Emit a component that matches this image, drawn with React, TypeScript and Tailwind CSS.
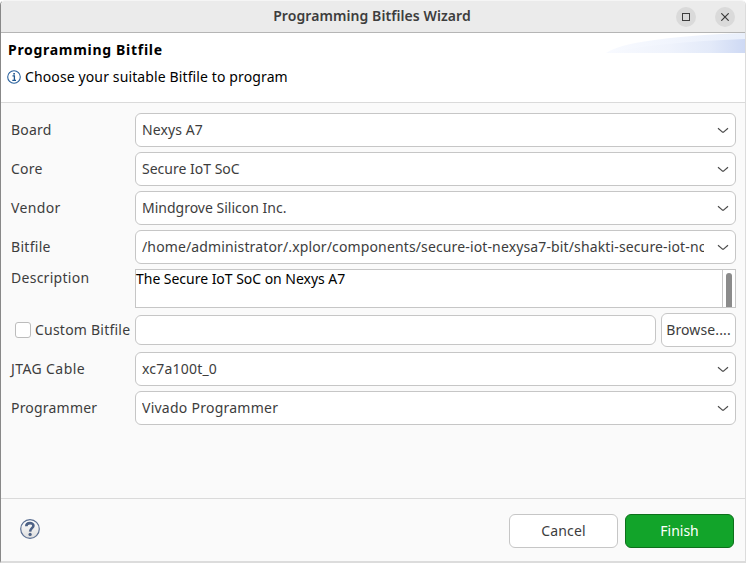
import type { ReactNode } from "react";

function Chevron() {
  return (
    <svg width="12" height="8" viewBox="0 0 12 8" fill="none" stroke="#4a4a4a" strokeWidth="1.2" className="shrink-0">
      <path d="M1 2.2 L5.2 5.9 Q6 6.5 6.8 5.9 L11 2.2" />
    </svg>
  );
}

function Select({ children, tracking = "" }: { children: ReactNode; tracking?: string }) {
  return (
    <button className="flex h-[34px] w-full items-center rounded-[6px] border border-[#c6c6c6] bg-white pr-[6px] pl-[6px] text-left">
      <span className={`mr-[13px] min-w-0 flex-1 overflow-hidden whitespace-nowrap ${tracking}`}>{children}</span>
      <Chevron />
    </button>
  );
}

function Row({ label, tracking = "", children }: { label: string; tracking?: string; children: ReactNode }) {
  return (
    <div className="flex items-center">
      <label className={`w-[124px] shrink-0 whitespace-nowrap ${tracking}`}>{label}</label>
      <div className="min-w-0 flex-1">{children}</div>
    </div>
  );
}

export default function App() {
  return (
    <div className="flex h-[563px] w-[746px] flex-col overflow-hidden rounded-t-[5px] border-x border-t border-b-2 border-t-[#f5f5f5] border-r-[#dcdcdc] border-b-[#dcdcdc] border-l-[#888888] bg-[#fafafa] font-['Noto_Sans','Open_Sans',sans-serif] text-[14px] leading-[20px] text-[#3d3d3d]">
      <header className="flex h-[32px] shrink-0 items-center border-b border-[#b5b5b5] bg-[#ebebeb]">
        <div className="w-[78px]" />
        <h1 className="flex-1 pb-[2px] text-center text-[14px] font-semibold tracking-[0.08px]">Programming Bitfiles Wizard</h1>
        <div className="flex w-[80px] gap-[19px] pl-[11px]">
          <button className="flex size-5 items-center justify-center rounded-full bg-[#dadada]">
            <span className="size-2 border border-[#3d3d3d]" />
          </button>
          <button className="flex size-5 items-center justify-center rounded-full bg-[#dadada]">
            <svg width="8" height="8" viewBox="0 0 8 8" stroke="#3d3d3d" strokeWidth="1.2">
              <path d="M0.3 0.3 L7.7 7.7 M7.7 0.3 L0.3 7.7" />
            </svg>
          </button>
        </div>
      </header>

      <section className="flex h-[70px] shrink-0 justify-between border-b border-[#dadada] bg-white text-black">
        <div className="pt-[7px] pl-[6px]">
          <h2 className="pl-px text-[14px] font-bold tracking-[0.7px]">Programming Bitfile</h2>
          <div className="mt-[7px] flex items-center gap-[4px]">
            <svg width="14" height="14" viewBox="0 0 14 14" className="-mt-px">
              <circle cx="7" cy="7" r="6.3" fill="#fff" stroke="#28609d" strokeWidth="1.1" />
              <path d="M5.5 5.8 H7.4 V10.4 M5.3 10.4 H9" fill="none" stroke="#1d568f" strokeWidth="1.3" />
              <rect x="6.3" y="3" width="1.6" height="1.6" fill="#1d568f" />
            </svg>
            <p className="tracking-[0.12px]">Choose your suitable Bitfile to program</p>
          </div>
        </div>
        <svg width="139" height="20" viewBox="0 0 139 20">
          <defs>
            <linearGradient id="swoosh" x1="0" x2="1">
              <stop offset="0" stopColor="#f8faff" />
              <stop offset="0.45" stopColor="#eff3fc" />
              <stop offset="0.75" stopColor="#e3eaf9" />
              <stop offset="1" stopColor="#ced9f4" />
            </linearGradient>
            <linearGradient id="swoosh-edge" x1="0" x2="1">
              <stop offset="0" stopColor="#f8faff" />
              <stop offset="1" stopColor="#e9effb" />
            </linearGradient>
          </defs>
          <path d="M0 20 C14 10 60 3 139 0 V20 Z" fill="url(#swoosh-edge)" />
          <path d="M0 20 C35 13 80 8 139 6 V20 Z" fill="url(#swoosh)" />
        </svg>
      </section>

      <main className="flex h-[396px] shrink-0 flex-col gap-[5px] border-b border-[#dadada] pt-[10px] pr-[9px] pl-[10px]">
        <Row label="Board" tracking="tracking-[0.2px]"><Select tracking="tracking-[0.1px]">Nexys A7</Select></Row>
        <Row label="Core" tracking="tracking-[0.2px]"><Select>Secure IoT SoC</Select></Row>
        <Row label="Vendor" tracking="tracking-[0.35px]"><Select>Mindgrove Silicon Inc.</Select></Row>
        <Row label="Bitfile" tracking="tracking-[0.3px]">
          <Select tracking="tracking-[0.135px]">/home/administrator/.xplor/components/secure-iot-nexysa7-bit/shakti-secure-iot-no</Select>
        </Row>
        <div className="flex h-[39px]">
          <label className="-mt-px w-[124px] shrink-0 tracking-[0.27px]">Description</label>
          <div className="flex flex-1 border border-[#c6c6c6] bg-white text-black">
            <p className="-mt-px flex-1 tracking-[-0.03px]">The Secure IoT SoC on Nexys A7</p>
            <div className="flex w-[13px] justify-center border-l border-[#c6c6c6] pt-[3px]">
              <div className="w-[6px] rounded-t-[3px] bg-[#8b8b8b]" />
            </div>
          </div>
        </div>
        <div className="flex h-[34px] items-center">
          <label className="flex w-[124px] shrink-0 items-center gap-[4px] pl-[4px] tracking-[0.22px] whitespace-nowrap">
            <span className="-mt-px size-4 shrink-0 rounded-[3px] border border-[#bcbcbc] bg-white" />
            Custom Bitfile
          </label>
          <input className="h-[30px] w-[521px] rounded-[6px] border border-[#c6c6c6] bg-white px-2 outline-none" />
          <button className="ml-[5px] h-[34px] w-[75px] rounded-[6px] border border-[#c6c6c6] bg-white tracking-[0.12px]">Browse....</button>
        </div>
        <Row label="JTAG Cable" tracking="tracking-[0.4px]"><Select tracking="tracking-[0.2px]">xc7a100t_0</Select></Row>
        <Row label="Programmer" tracking="tracking-[0.2px]"><Select tracking="tracking-[0.25px]">Vivado Programmer</Select></Row>
      </main>

      <footer className="flex flex-1 items-start justify-between pt-[15px] pr-[11px] pl-[19px]">
        <svg width="20" height="20" viewBox="0 0 20 20" className="mt-[5px]">
          <defs>
            <linearGradient id="help" x1="0" y1="0" x2="0" y2="1">
              <stop offset="0" stopColor="#fff" />
              <stop offset="1" stopColor="#dedede" />
            </linearGradient>
          </defs>
          <circle cx="10" cy="10" r="9.3" fill="url(#help)" stroke="#5b6f92" strokeWidth="1.2" />
          <path d="M6.3 7.2 C6.3 3.2 13.6 3.2 13.4 6.8 C13.2 9.2 10.2 9.2 10.1 12.6" fill="none" stroke="#4d6185" strokeWidth="2.6" />
          <circle cx="10.1" cy="15.4" r="1.6" fill="#4d6185" />
        </svg>
        <div className="flex gap-[7px]">
          <button className="h-[34px] w-[109px] rounded-[6px] border border-[#c6c6c6] bg-white tracking-[0.15px]">Cancel</button>
          <button className="h-[34px] w-[109px] rounded-[6px] border border-[#0d701b] bg-[#12a42a] text-white">Finish</button>
        </div>
      </footer>
    </div>
  );
}
